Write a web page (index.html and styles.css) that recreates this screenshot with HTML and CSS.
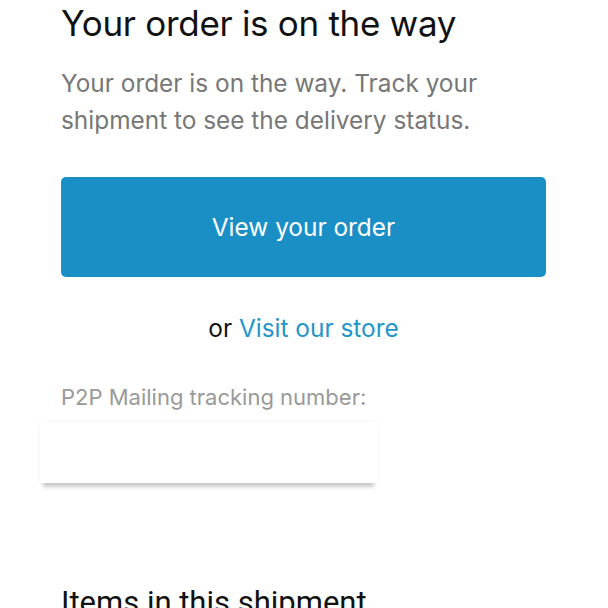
FILE: index.html
```html
<!DOCTYPE html>
<html>
<head>
<meta charset="utf-8">
<link rel="stylesheet" href="styles.css">
</head>
<body>
<main class="page">
  <h1 class="title">Your order is on the way</h1>
  <p class="lead">Your order is on the way. Track your shipment to see the delivery status.</p>
  <a class="btn" href="#">View your order</a>
  <p class="alt">or <a class="link" href="#">Visit our store</a></p>
  <p class="label">P2P Mailing tracking number:</p>
  <div class="tracking"></div>
  <h2 class="section">Items in this shipment</h2>
</main>
</body>
</html>
```

FILE: styles.css
```css
* { box-sizing: border-box; }
html, body { margin: 0; padding: 0; background: #fff; }
body { font-family: Inter, "Noto Sans", sans-serif; }
.page {
  width: 485px;
  margin-left: 61px;
  display: flex;
  flex-direction: column;
}
.title {
  margin: 0;
  font-size: 35px;
  font-weight: 400;
  line-height: 46px;
  color: #111;
  letter-spacing: -0.3px;
}
.lead {
  margin: 19px 0 0;
  font-size: 24.4px;
  line-height: 37px;
  color: #777;
  width: 440px;
}
.btn {
  margin-top: 38px;
  height: 100px;
  background: #1a8fc6;
  border-radius: 5px;
  color: #fff;
  font-size: 24.4px;
  text-decoration: none;
  display: flex;
  align-items: center;
  justify-content: center;
}
.alt {
  margin: 36px 0 0;
  text-align: center;
  font-size: 24.4px;
  line-height: 30px;
  color: #111;
}
.link { color: #1f95c9; text-decoration: none; }
.label {
  margin: 41px 0 0;
  font-size: 22px;
  line-height: 26px;
  color: #999;
}
.tracking {
  margin-top: 12px;
  margin-left: -21px;
  width: 337px;
  height: 61px;
  background: #fff;
  box-shadow: 0 7px 4px -3px rgba(0,0,0,0.2), 0 0 6px rgba(0,0,0,0.04);
}
.section {
  margin: 100px 0 0;
  font-family: Roboto, sans-serif;
  font-size: 31px;
  font-weight: 400;
  color: #111;
  line-height: 40px;
}
```
